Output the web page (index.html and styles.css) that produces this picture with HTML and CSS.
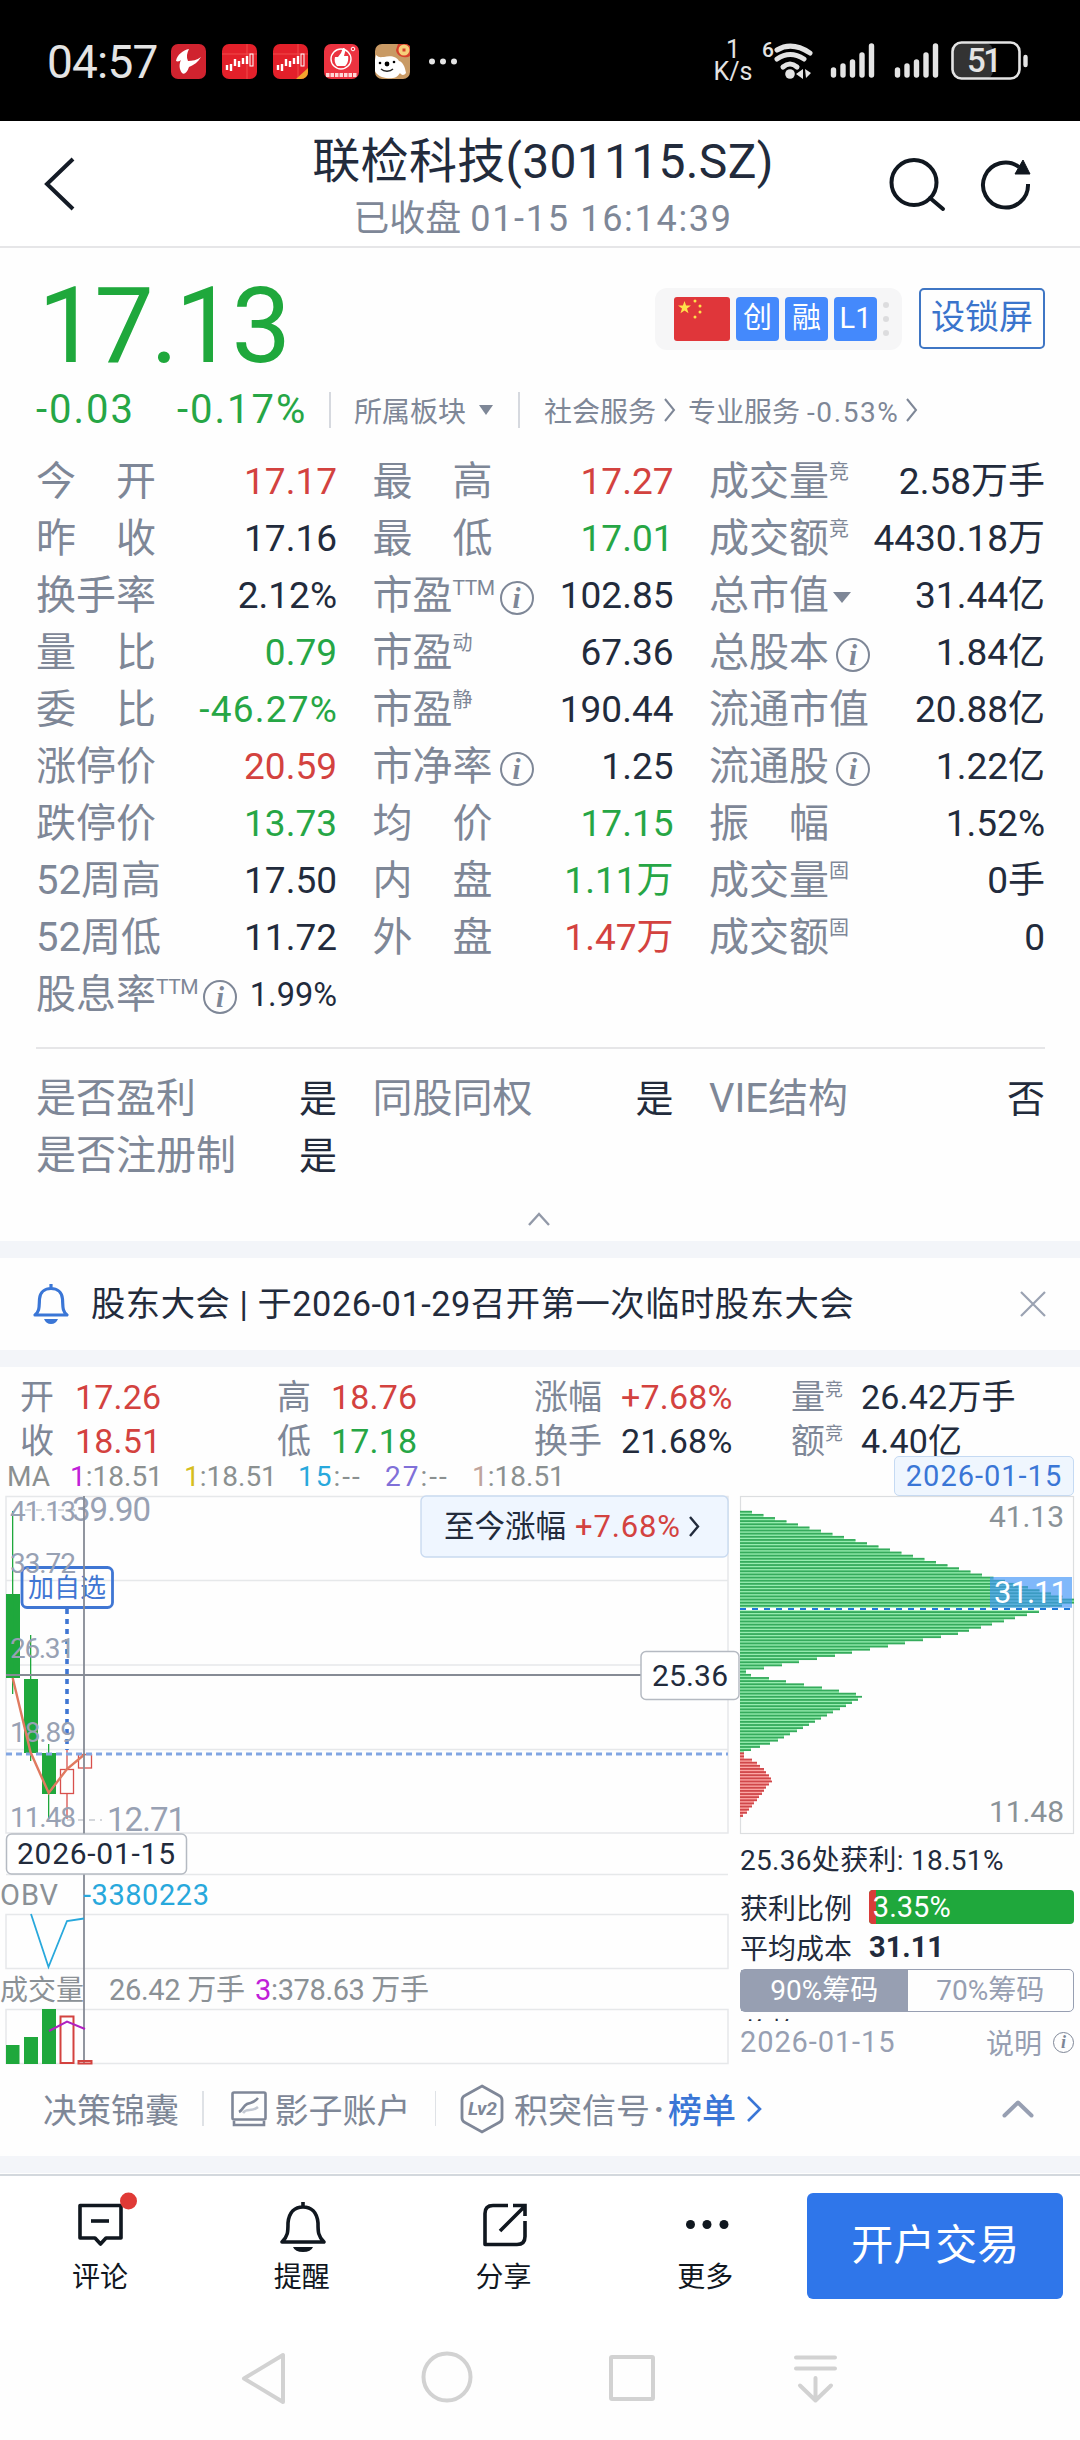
FILE: index.html
```html
<!DOCTYPE html>
<html lang="zh-CN">
<head>
<meta charset="utf-8">
<title>联检科技(301115.SZ)</title>
<link rel="stylesheet" href="styles.css">
</head>
<body>
<div class="statusbar">
  <span class="clock">04:57</span>
  <svg class="apps" width="290" height="36" viewBox="0 0 290 36">
    <rect x="0" y="0" width="35" height="35" rx="7" fill="#d0232f"/>
    <path d="M18 5c-6 1-12 6-13 12 2 1 4 0 5-1-2 4-2 9 1 13 2 2 5 0 7-6 5-2 9-5 12-10-4 3-9 4-13 4-2-4-1-8 1-12z" fill="#fff"/>
    <g id="candles">
      <rect x="51" y="0" width="35" height="35" rx="7" fill="#e3202a"/>
      <path d="M51 10h35M76 0v35" stroke="#f04a4a" stroke-width="1"/>
      <path d="M56 21v5M60 20v7M64 15v7M68 17v6M72 14v6M76 12v8" stroke="#fff" stroke-width="2.4"/>
      <rect x="79" y="10" width="3" height="12" fill="none" stroke="#fff" stroke-width="1"/>
    </g>
    <use href="#candles" x="51"/>
    <path d="M137 24v4a7 7 0 0 1-7 7h-5z" fill="#f2a52c"/>
    <rect x="153" y="0" width="35" height="35" rx="7" fill="#ec3340"/>
    <circle cx="170" cy="15" r="10" fill="none" stroke="#fff" stroke-width="1.4"/>
    <path d="M164 13h3l3-4 2-5c2 0 3 1 2 4l-1 4h4c1 4-1 9-3 10h-8c-2-2-3-6-2-9z" fill="#fff"/>
    <circle cx="182" cy="5" r="1.8" fill="none" stroke="#fff"/>
    <path d="M155 31h31" stroke="#ffd6d6" stroke-width="4" stroke-dasharray="3.5 1"/>
    <rect x="204" y="0" width="35" height="35" rx="7" fill="#c99a64"/>
    <path d="M205 11c3 3 5 2 8 2 7-2 13 0 15 4 4 1 6 6 7 12-2 3-5 2-6 0-3 5-8 6-14 5-6-1-10-4-11-7V16z" fill="#fff"/>
    <path d="M210 25c3 3 9 3 12 0" fill="none" stroke="#222" stroke-width="1.4"/>
    <circle cx="209" cy="19" r="1.3"/><circle cx="216" cy="20" r="2.4"/><circle cx="223" cy="18" r="1.3"/>
    <path d="M225 6a9 8 0 0 0 14 6V2l-3-2h-9z" fill="#d8402c"/><circle cx="233" cy="6" r="5.5" fill="#f6cf7a"/><rect x="231.500" y="4.500" width="3" height="3" fill="#d8402c"/>
    <g fill="#e4e4e4"><circle cx="261" cy="17.500" r="3"/><circle cx="272" cy="17.500" r="3"/><circle cx="283" cy="17.500" r="3"/></g>
  </svg>
  <span class="rate"><span>1</span><span>K/s</span></span>
  <svg class="signals" width="270" height="44" viewBox="760 38 270 44">
    <text x="762" y="57" font-size="21" font-weight="500" fill="#e4e4e4">6</text>
    <g fill="none" stroke="#e4e4e4" stroke-width="5" stroke-linecap="round">
      <path d="M777 50q15-9 33 3M777 59q13-9 27 0M783 67q7-6 14 0"/>
    </g>
    <circle cx="790" cy="74" r="4.800" fill="#e4e4e4"/>
    <path d="M803 69v10l-7-5zM804 71v7M805 69l6 4-5 5z" fill="#e4e4e4"/>
    <g id="bars" stroke="#e4e4e4" stroke-width="5.400" stroke-linecap="round"><path d="M833.500 70v5M843 66v9M852.500 62v13M862 55v20M871.500 46v29"/></g>
    <use href="#bars" x="64"/>
    <rect x="953" y="43" width="40" height="36" rx="8" fill="#333"/>
    <rect x="952.500" y="42.500" width="67" height="36" rx="9" fill="none" stroke="#e4e4e4" stroke-width="2.600"/>
    <path d="M1025.500 57v8" stroke="#e4e4e4" stroke-width="4.400" stroke-linecap="round"/>
    <text x="967" y="72" font-size="33" font-weight="500" fill="#e4e4e4" textLength="35">51</text>
  </svg>
</div>

<header class="header">
  <svg class="back" width="34" height="56" viewBox="0 0 34 56"><path d="M30 3L4 28l26 25" fill="none" stroke="#141b26" stroke-width="4"/></svg>
  <div class="titles">
    <h1 class="title">联检科技(301115.SZ)</h1>
    <div class="subtitle">已收盘 <span class="wide">01-15 16:14:39</span></div>
  </div>
  <svg class="actions" width="144" height="56" viewBox="888 156 144 56" fill="none" stroke="#10171f" stroke-width="4">
    <circle cx="914" cy="182.500" r="22.500"/><path d="M930 198l13 11" stroke-linecap="round"/>
    <path d="M1019 167a22.500 22.500 0 1 0 9 17"/><path d="M1023 160l7 14h-15z" fill="#10171f" stroke-width="1"/>
  </svg>
</header>

<section class="summary">
  <div class="price-row">
    <span class="price">17.13</span>
    <div class="badges">
      <svg class="flag" width="56" height="44" viewBox="0 0 56 44"><rect width="56" height="44" rx="3" fill="#e0363a"/><g fill="#ffe14a"><path d="M10.500 4l1.600 4.600h4.900l-4 3 1.500 4.600-4-2.800-4 2.800 1.500-4.600-4-3h4.900z"/><circle cx="21" cy="4" r="1.500"/><circle cx="26" cy="9" r="1.500"/><circle cx="26" cy="15" r="1.500"/><circle cx="21" cy="20" r="1.500"/></g></svg>
      <span class="badge">创</span><span class="badge">融</span><span class="badge">L1</span>
      <span class="more-dots"><i></i><i></i><i></i></span>
    </div>
    <span class="lock-btn">设锁屏</span>
  </div>
  <div class="change-row">
    <span class="chg chg-a">-0.03</span><span class="chg chg-b">-0.17%</span>
    <span class="vsep"></span>
    <span class="sector">所属板块</span><span class="caret"></span>
    <span class="vsep vsep-b"></span>
    <span class="link">社会服务</span><svg class="chev" width="12" height="24" viewBox="0 0 12 24"><path d="M1 1l9 11-9 11"/></svg>
    <span class="link link-b">专业服务 <span class="pct">-0.53%</span></span><svg class="chev chev-b" width="12" height="24" viewBox="0 0 12 24"><path d="M1 1l9 11-9 11"/></svg>
  </div>
  <div class="quotes">
    <div class="cell"><span class="k">今　开</span><b class="up">17.17</b></div><div class="cell"><span class="k">最　高</span><b class="up">17.27</b></div><div class="cell"><span class="k">成交量<sup>竞</sup></span><b>2.58万手</b></div>
    <div class="cell"><span class="k">昨　收</span><b>17.16</b></div><div class="cell"><span class="k">最　低</span><b class="down">17.01</b></div><div class="cell"><span class="k">成交额<sup>竞</sup></span><b>4430.18万</b></div>
    <div class="cell"><span class="k">换手率</span><b>2.12%</b></div><div class="cell"><span class="k">市盈<sup class="ttm">TTM</sup><em class="info">i</em></span><b>102.85</b></div><div class="cell"><span class="k">总市值<span class="caret caret-lg"></span></span><b>31.44亿</b></div>
    <div class="cell"><span class="k">量　比</span><b class="down">0.79</b></div><div class="cell"><span class="k">市盈<sup>动</sup></span><b>67.36</b></div><div class="cell"><span class="k">总股本<em class="info">i</em></span><b>1.84亿</b></div>
    <div class="cell"><span class="k">委　比</span><b class="down neg">-46.27%</b></div><div class="cell"><span class="k">市盈<sup>静</sup></span><b>190.44</b></div><div class="cell"><span class="k">流通市值</span><b>20.88亿</b></div>
    <div class="cell"><span class="k">涨停价</span><b class="up">20.59</b></div><div class="cell"><span class="k">市净率<em class="info">i</em></span><b>1.25</b></div><div class="cell"><span class="k">流通股<em class="info">i</em></span><b>1.22亿</b></div>
    <div class="cell"><span class="k">跌停价</span><b class="down">13.73</b></div><div class="cell"><span class="k">均　价</span><b class="down">17.15</b></div><div class="cell"><span class="k">振　幅</span><b>1.52%</b></div>
    <div class="cell"><span class="k">52周高</span><b>17.50</b></div><div class="cell"><span class="k">内　盘</span><b class="down">1.11万</b></div><div class="cell"><span class="k">成交量<sup>固</sup></span><b>0手</b></div>
    <div class="cell"><span class="k">52周低</span><b>11.72</b></div><div class="cell"><span class="k">外　盘</span><b class="up">1.47万</b></div><div class="cell"><span class="k">成交额<sup>固</sup></span><b>0</b></div>
    <div class="cell"><span class="k">股息率<sup class="ttm">TTM</sup><em class="info">i</em></span><b class="small">1.99%</b></div>
  </div>
  <div class="quotes traits">
    <div class="cell"><span class="k">是否盈利</span><b>是</b></div><div class="cell"><span class="k">同股同权</span><b>是</b></div><div class="cell"><span class="k">VIE结构</span><b>否</b></div>
    <div class="cell"><span class="k">是否注册制</span><b>是</b></div>
  </div>
  <svg class="fold" width="24" height="16" viewBox="0 0 24 16"><path d="M2 14L12 3l10 11" fill="none" stroke="#9299a8" stroke-width="2.400"/></svg>
</section>

<section class="notice">
  <svg width="38" height="42" viewBox="0 0 38 42" fill="none" stroke="#3a76d6" stroke-width="3.200"><path d="M19 1v5M3 32c5-4 4-9 4.500-16C8 9 13 5.500 19 5.500S30 9 30.500 16c.5 7-.5 12 4.500 16z" stroke-linejoin="round"/><path d="M12 36h14q-2 5-7 5t-7-5z" fill="#3a76d6" stroke="none"/></svg>
  <span class="notice-text">股东大会 | 于2026-01-29召开第一次临时股东大会</span>
  <svg class="close" width="26" height="26" viewBox="0 0 26 26"><path d="M1 1l24 24M25 1L1 25" stroke="#9aa2b2" stroke-width="2.200"/></svg>
</section>

<section class="kline">
  <div class="ohlc">
    <span class="k">开</span><b class="up">17.26</b><span class="k">高</span><b class="up">18.76</b><span class="k">涨幅</span><b class="up">+7.68%</b><span class="k">量<sup>竞</sup></span><b>26.42万手</b>
    <span class="k">收</span><b class="up">18.51</b><span class="k">低</span><b class="down">17.18</b><span class="k">换手</span><b>21.68%</b><span class="k">额<sup>竞</sup></span><b>4.40亿</b>
  </div>
  <div class="ma-row">
    <span class="ma ma-name">MA</span><span class="ma ma-val"><i class="m1">1</i>:18.51</span><span class="ma ma-val"><i class="m2">1</i>:18.51</span><span class="ma ma-none"><i class="m3">15</i>:--</span><span class="ma ma-none"><i class="m4">27</i>:--</span><span class="ma ma-val"><i class="m5">1</i>:18.51</span>
    <span class="date-pill">2026-01-15</span>
  </div>
  <div class="panels">
    <svg class="chart" width="740" height="578" viewBox="0 1494 740 578">
      <g fill="none" stroke="#e6e8ea" stroke-width="1.500">
        <path d="M6 1496.500H728V1833H6zM6 1580.500H728M6 1665H728M6 1749.500H728M6 1874.500H728M6 1914.500H728V1968.500H6zM6 2009.500H728V2063.500H6z"/>
      </g>
      <g fill="#1fa83c">
        <path d="M6 1594h14v84H6zM24 1679h14v74H24zM42 1753h14v41H42z"/>
        <path d="M12 1511h1.300v183H12zM30 1635h1.300v126H30zM48 1744h1.300v75H48z"/>
      </g>
      <path d="M25 1510H78M56 1820h46" stroke="#a9afb8" stroke-dasharray="6 5"/>
      <g fill="#fff" stroke="#d8504c" stroke-width="1.300">
        <path d="M67 1750v19M67 1794v25"/><rect x="60.500" y="1769.500" width="13" height="24" fill="none"/><rect x="78.500" y="1754.500" width="13" height="13.500" fill="none"/>
      </g>
      <path d="M67 1609V1750" stroke="#3f76d3" stroke-width="3.600" stroke-dasharray="5 5"/>
      <path d="M6 1754H728" stroke="#82a6e2" stroke-width="2.800" stroke-dasharray="6 4"/>
      <rect x="22" y="1567.500" width="90.500" height="40" rx="5" fill="none" stroke="#3f76d3" stroke-width="2.800"/>
      <text x="28" y="1597" font-size="26" fill="#3f76d3" textLength="78">加自选</text>
      <g font-size="28" fill="#98a1b3">
        <text x="10" y="1521" textLength="66">41.13</text><text x="10" y="1573" textLength="66">33.72</text><text x="10" y="1658" textLength="65">26.31</text><text x="10" y="1742" textLength="66">18.89</text><text x="10" y="1827" textLength="66">11.48</text>
        <text x="72" y="1521" font-size="33" textLength="79">39.90</text><text x="107" y="1831" font-size="33" textLength="79">12.71</text>
      </g>
      <path d="M12.700 1678L30.500 1752 48.700 1793 67 1769 85 1754" fill="none" stroke="#e07a60" stroke-width="2.400"/>
      <path d="M6 1675H641M84 1496V1834M84 1874V2064" stroke="#868b95" stroke-width="1.800"/>
      <rect x="421" y="1496" width="307" height="61" rx="5" fill="#eff6ff" stroke="#c9daf0" stroke-width="1.400"/>
      <text x="444" y="1537" font-size="30.500" fill="#222b3c">至今涨幅</text><text x="575" y="1537" font-size="31" fill="#d3423f" textLength="105">+7.68%</text>
      <path d="M690 1517l8 9.500-8 9.500" fill="none" stroke="#222b3c" stroke-width="2.400"/>
      <rect x="641" y="1651.500" width="98" height="48" rx="5" fill="#fff" stroke="#b5bac2" stroke-width="1.500"/>
      <text x="652" y="1686" font-size="30" fill="#222b3c" textLength="76">25.36</text>
      <rect x="6.500" y="1834" width="180" height="40" rx="5" fill="#fff" stroke="#b5bac2" stroke-width="1.500"/>
      <text x="17" y="1864" font-size="30" fill="#222b3c" textLength="158">2026-01-15</text>
      <g font-size="29" fill="#8b9196">
        <text x="0" y="1905" textLength="58">OBV</text><text x="83" y="1905" fill="#28a8dc" textLength="126">-3380223</text>
        <text x="0" y="2000" font-size="28">成交量</text><text x="109" y="2000" textLength="136">26.42 万手</text><text x="255" y="2000" fill="#c020d8">3</text><text x="271" y="2000" textLength="158">:378.63 万手</text>
      </g>
      <path d="M31 1914L48.500 1967 67 1921 84 1918.500" fill="none" stroke="#28a8dc" stroke-width="1.800"/>
      <path d="M6 2045h13.500v19H6zM24 2037h14v27H24zM42 2009h14v55H42z" fill="#1fa83c"/>
      <path d="M60.500 2016.500h13v46.500h-13zM78.500 2061h13v2.500h-13z" fill="none" stroke="#d3423f" stroke-width="2"/>
      <path d="M49 2031L67 2021.500 85 2029" fill="none" stroke="#b020c0" stroke-width="2"/>
    </svg>
    <div class="chips">
      <svg width="334" height="341" viewBox="740 1494 334 341">
        <rect x="740.500" y="1496.500" width="333" height="337" fill="none" stroke="#dcdee0" stroke-width="1.200"/>
        <g id="profile"></g>
        <rect x="990" y="1577" width="82" height="32" fill="#3e93f7" fill-opacity=".66"/>
        <path d="M740 1609h332" stroke="#fff" stroke-width="2.400"/><path d="M740 1609h332" stroke="#1f78d8" stroke-width="2.200" stroke-dasharray="6 6"/>
        <text x="994" y="1603" font-size="31" fill="#fff" textLength="74">31.11</text>
        <g font-size="30" fill="#8a9298"><text x="989" y="1527" textLength="75">41.13</text><text x="989" y="1822" textLength="75">11.48</text></g>
      </svg>
      <div class="chip-line chip-profit">25.36处获利: 18.51%</div>
      <div class="chip-line"><span class="chip-k">获利比例</span><span class="ratio"><span class="ratio-up" style="width:3.35%"></span><span class="ratio-val">3.35%</span></span></div>
      <div class="chip-line chip-cost"><span class="chip-k">平均成本</span><strong>31.11</strong></div>
      <div class="tabs"><span class="tab tab-on">90%筹码</span><span class="tab">70%筹码</span></div>
      <div class="clip">价格</div>
      <div class="chip-foot"><span class="foot-date">2026-01-15</span><span class="foot-help">说明</span><em class="info info-sm">i</em></div>
    </div>
  </div>
  <div class="tools">
    <span class="tool-a">决策锦囊</span><span class="tsep"></span>
    <svg class="shadow-ic" width="36" height="36" viewBox="0 0 36 36" fill="none" stroke="#7f8798" stroke-width="2.600"><rect x="1.500" y="1.500" width="33" height="27" rx="1.500"/><path d="M3 30v4h30v-4M8 21c4-2 4-6 8-8s6 0 11-6"/><path d="M12 22c4-6 8 0 15-6" stroke="#c3c8d2"/></svg>
    <span>影子账户</span><span class="tsep tsep-b"></span>
    <svg class="lv2" width="44" height="50" viewBox="0 0 44 50"><path d="M22 2l17 9.500q3 1.500 3 4.500v18q0 3-3 4.500L22 48 5 38.500q-3-1.500-3-4.500V16q0-3 3-4.500z" fill="none" stroke="#7f8798" stroke-width="2.800"/><text x="8" y="31" font-size="18" font-weight="700" font-style="italic" fill="#7f8798" textLength="29" lengthAdjust="spacingAndGlyphs">Lv2</text></svg>
    <span>积突信号</span><span class="dot">·</span><span class="rank">榜单</span>
    <svg class="rank-chev" width="16" height="26" viewBox="0 0 16 26"><path d="M2 1l12 12L2 25" fill="none" stroke="#3a76d6" stroke-width="2.600"/></svg>
    <svg class="tool-up" width="32" height="20" viewBox="0 0 32 20"><path d="M2.500 16.500L16 3.500l13.500 13" fill="none" stroke="#979fb2" stroke-width="4" stroke-linecap="round" stroke-linejoin="round"/></svg>
  </div>
</section>

<nav class="bottombar">
  <div class="nav-item"><svg width="56" height="56" viewBox="73 2195 56 56" fill="none" stroke="#10171f" stroke-width="3.600"><path d="M80 2205.500h41v32.500h-15l-5.500 6-5.500-6H80z" stroke-linejoin="round"/><path d="M91 2221h18"/><circle class="unread" cx="128.500" cy="2201" r="8.500"/></svg><span>评论</span></div>
  <div class="nav-item"><svg width="56" height="56" viewBox="274 2195 56 56" fill="none" stroke="#10171f" stroke-width="3.600"><path d="M302 2202v5M281 2242c6-6 6-10 6-19 1-11 7-16 15-16s14 5 15 16c0 9 0 13 6 19z" stroke-linejoin="round"/><path d="M292 2247h20q-2 5-10 5t-10-5z" fill="#10171f" stroke="none"/></svg><span>提醒</span></div>
  <div class="nav-item"><svg width="56" height="56" viewBox="476 2195 56 56" fill="none" stroke="#10171f" stroke-width="3.600"><path d="M508 2205.500h-15q-8 0-8 8v31h32q8 0 8-8V2221" stroke-linejoin="round"/><path d="M513 2205.500h12V2216M524 2207l-24 24"/></svg><span>分享</span></div>
  <div class="nav-item"><svg width="56" height="56" viewBox="677 2195 56 56" fill="#10171f"><circle cx="689.500" cy="2224.500" r="4.500"/><circle cx="706" cy="2224.500" r="4.500"/><circle cx="723" cy="2224.500" r="4.500"/></svg><span>更多</span></div>
  <span class="trade">开户交易</span>
</nav>
<div class="sysnav">
  <svg width="640" height="60" viewBox="220 2347 640 60" fill="none" stroke="#d2d2d2" stroke-width="4" stroke-linejoin="round">
    <path d="M283 2355v47l-39-23.500z"/><circle cx="447" cy="2377" r="23.500"/><rect x="611" y="2357" width="42" height="42" rx="1"/>
    <path d="M796 2357.500h39M796 2368.500h39M815.500 2378v22M800 2385.500l15.500 15 15.500-15" stroke-linecap="round"/>
  </svg>
</div>
<script src="profile.js"></script>
</body>
</html>
```
FILE: styles.css
```css
* { box-sizing: border-box; }
body { margin: 0; width: 1080px; height: 2440px; overflow: hidden; background: #fefefe; color: #222b3c; font-family: Roboto, "Noto Sans CJK SC", sans-serif; white-space: nowrap; }
svg { display: block; flex: none; overflow: visible; }
i, em { font-style: normal; }
b { font-weight: 400; }
.up { color: #d3423f; }
.down { color: #26a645; }

.statusbar { height: 121px; background: #000; display: flex; align-items: flex-start; color: #e4e4e4; }
.clock { margin-left: 47px; width: 124px; padding-top: 35px; font-size: 46px; line-height: 54px; letter-spacing: -.8px; }
.apps { margin-top: 44px; }
.rate { display: flex; flex-direction: column; align-items: center; width: 40px; margin-left: 252px; margin-right: 7px; padding-top: 39px; font-size: 25px; line-height: 22px; }
.signals { margin-top: 38px; }

.header { height: 127px; border-bottom: 2px solid #e6e6e8; display: flex; align-items: flex-start; background: #fff; }
.back { margin: 35px 0 0 43px; }
.titles { width: 734px; margin-left: 99px; text-align: center; }
.title { margin: 11px 0 0; font-size: 48px; line-height: 60px; font-weight: 400; letter-spacing: .3px; }
.subtitle { margin-top: 6px; font-size: 36px; line-height: 42px; color: #7e8797; }
.wide { letter-spacing: 1.7px; }
.actions { margin: 35px 0 0 -22px; }

.price-row { display: flex; margin: 23px 35px 0 36px; height: 110px; }
.price { padding-left: 2px; width: 619px; font-size: 106px; line-height: 110px; letter-spacing: -3.3px; color: #1fa83c; }
.badges { margin-top: 17px; width: 247px; height: 62px; border-radius: 12px; background: #f6f6f7; display: flex; align-items: center; padding-left: 19px; gap: 6px; }
.badge { width: 43px; height: 44px; border-radius: 4px; background: #4489fc; color: #fff; font-size: 29px; line-height: 43px; text-align: center; }
.more-dots { display: flex; flex-direction: column; gap: 8px; }
.more-dots i { width: 6px; height: 6px; border-radius: 50%; background: #dcdcde; }
.lock-btn { margin: 17px 0 0 17px; width: 126px; height: 61px; border: 2px solid #3f76c4; border-radius: 5px; font-size: 34px; line-height: 55px; text-align: center; color: #3a74cc; }

.change-row { height: 58px; display: flex; align-items: center; padding: 0 0 1px 36px; color: #7e8797; font-size: 28px; }
.chg { font-size: 40px; color: #26a645; letter-spacing: 2px; }
.chg-a { width: 141px; }
.chg-b { width: 152px; }
.vsep { width: 2px; height: 36px; background: #d6d9df; }
.sector { margin-left: 23px; }
.vsep-b { margin: 0 24px 0 25px; }
.caret { display: inline-block; border: 7px solid transparent; border-top: 10px solid #7e8797; border-bottom: 0; margin-left: 13px; }
.caret-lg { border-width: 11px 9px 0; margin-left: 4px; vertical-align: 6px; }
.chev { margin-left: 8px; fill: none; stroke: #7e8797; stroke-width: 2; }
.chev-b { margin-left: 7px; }
.link-b { margin-left: 12px; }
.pct { letter-spacing: 1.6px; }

.quotes { margin: 14px 35px 0 36px; display: grid; grid-template-columns: 301px 301px 336px; column-gap: 35.500px; grid-auto-rows: 57px; }
.cell { display: flex; justify-content: space-between; height: 57px; line-height: 58px; }
.k { color: #7e8797; font-size: 40px; }
.cell b { font-size: 37px; }
.cell b.small { font-size: 32.500px; }
.cell b.neg { letter-spacing: 1.2px; margin-right: -1px; }
sup { font-size: 20px; line-height: 0; vertical-align: 16px; }
.ttm { font-size: 21px; vertical-align: 14px; letter-spacing: -.5px; }
.info { display: inline-flex; align-items: center; justify-content: center; width: 34px; height: 34px; border: 2.500px solid #7e8797; border-radius: 50%; margin-left: 7px; font: italic bold 29px/26px "Liberation Serif", serif; vertical-align: 1px; color: #7e8797; }
.ttm + .info { margin-left: 5px; }
.traits { margin-top: 24px; padding-top: 20px; border-top: 2px solid #e6e6e8; }
.traits .cell { line-height: 60px; }
.traits b { font-size: 38px; }
.fold { margin: 28px 0 0 527px; }

.notice { margin-top: 14px; height: 126px; border: solid #f3f5f9; border-width: 17px 0; display: flex; align-items: center; padding: 0 34px 0 32px; }
.notice-text { margin-left: 21px; padding-bottom: 7px; font-size: 34.300px; letter-spacing: .55px; }
.close { margin-left: auto; }

.ohlc { display: grid; grid-template-columns: 56px 201px 55px 202px 88px 169px 71px 200px; grid-auto-rows: 44px; line-height: 44px; padding: 8px 0 0 20px; }
.ohlc .k { font-size: 34px; }
.ohlc b { font-size: 34px; margin-left: -1px; letter-spacing: .2px; }
.ohlc sup { font-size: 18px; vertical-align: 13px; }
.ma-row { margin-top: -7px; height: 38px; display: flex; align-items: flex-start; padding-left: 7px; color: #8b9090; font-size: 28px; line-height: 42px; }
.ma-name { width: 63px; }
.ma-val { width: 114px; }
.ma-none { width: 87px; letter-spacing: 2px; }
.m1 { color: #c020d8; }
.m2 { color: #d6be1e; }
.m3 { color: #28a8dc; }
.m4 { color: #8070d8; }
.m5 { color: #c0a49c; }
.date-pill { margin-left: auto; margin-right: 6px; width: 180px; height: 40px; border: 1px solid #c5daf3; border-radius: 5px; background: #eff6fe; color: #3a76d6; font-size: 29px; letter-spacing: 1px; line-height: 38px; text-align: center; }
.panels { display: flex; height: 578px; }
.chips { width: 334px; display: flex; flex-direction: column; color: #222b3c; font-size: 28px; }
.chip-line { display: flex; align-items: center; height: 40px; }
.chip-profit { height: 48px; margin-bottom: 4px; padding-bottom: 2px; letter-spacing: .3px; }
.chip-k { width: 129px; }
.ratio { flex: 1; height: 34px; display: flex; align-items: center; border-radius: 4px; background: #1fa83c; overflow: hidden; color: #fff; font-size: 29px; }
.ratio-up { align-self: stretch; background: #d93c39; }
.ratio-val { margin-left: -3px; }
.chip-cost strong { font-size: 29px; font-weight: 700; }
.tabs { margin-top: 2px; height: 43px; display: flex; border: 1.500px solid #979fb2; border-radius: 5px; color: #979fb2; line-height: 41px; text-align: center; flex: none; }
.tab { width: 166px; }
.tab-on { width: 167px; background: #979fb2; color: #fff; }
.clip { height: 3px; margin: 6px 0 0 2px; line-height: 31px; overflow: hidden; flex: none; }
.chip-foot { display: flex; align-items: center; height: 42px; color: #979fb2; }
.foot-date { font-size: 29px; letter-spacing: .9px; }
.foot-help { margin-left: auto; margin-right: 11px; }
.info-sm { width: 21px; height: 21px; border-width: 1.500px; margin: 0; font-size: 18px; line-height: 17px; }

.tools { height: 84px; display: flex; align-items: center; padding: 0 0 11px 43px; font-size: 34px; color: #7e8797; }
.tsep { width: 1.500px; height: 35px; background: #dfe2e6; margin: 0 27px 0 23px; }
.tsep-b { margin: 0 24px; }
.shadow-ic { margin-right: 8px; }
.lv2 { margin-right: 10px; }
.dot { width: 18px; text-align: center; font-weight: 700; }
.rank { color: #3a76d6; font-weight: 500; }
.rank-chev { margin-left: 10px; }
.tool-up { margin-left: auto; margin-right: 46px; }

.kline { border-bottom: 17px solid #f3f5f9; }
.bottombar { margin-top: 1px; height: 166px; border-top: 2px solid #d3d8dd; display: flex; align-items: flex-start; background: #fff; color: #10171f; }
.nav-item { width: 201.800px; padding-top: 19px; display: flex; flex-direction: column; align-items: center; font-size: 28px; }
.nav-item span { line-height: 40px; margin-top: 7px; margin-left: -2px; }
.unread { fill: #e03a36; stroke: none; }
.trade { margin-top: 17px; width: 256px; height: 106px; border-radius: 6px; background: #2f76ea; color: #fff; font-size: 42px; line-height: 105px; text-align: center; flex: none; }
.sysnav { padding: 7px 0 0 220px; }
```
FILE: profile.js
```js
// Chip distribution: bar lengths from the top price down to the lowest one.
const green = [];
for (let i = 0; i < 29; i++) green.push(12 + i * 11.5);
green.push(334, 322, 310, 299, 287, 275, 264, 252, 241, 229, 218,
  201, 183, 165, 148, 130, 112, 95, 77, 59, 42, 24, 6,
  11, 29, 46, 64, 82, 99, 116, 122, 118, 112, 106, 100, 93, 87, 81, 75, 69, 63, 57, 50, 44, 38, 30, 20, 11);
const red = [4, 4, 12, 17, 20, 24, 26, 29, 31, 32, 29, 26, 24, 22, 19, 17, 14, 12, 9, 7, 3];
const step = 3.137;
const rows = green.map(w => [w, '#35ab5c', '#97ecb0']).concat(red.map(w => [w, '#d0474a', '#fba6a4']));
document.getElementById('profile').innerHTML = rows.map(([w, dark, light], i) => {
  const y = 1511.7 + i * step;
  const next = rows[i + 1] ? Math.min(w, rows[i + 1][0]) : 0;
  return `<rect x="740" y="${y}" width="${next}" height="${step}" fill="${light}"/>` +
    `<rect x="740" y="${y - 0.9}" width="${w}" height="1.8" fill="${dark}"/>`;
}).join('');
```
